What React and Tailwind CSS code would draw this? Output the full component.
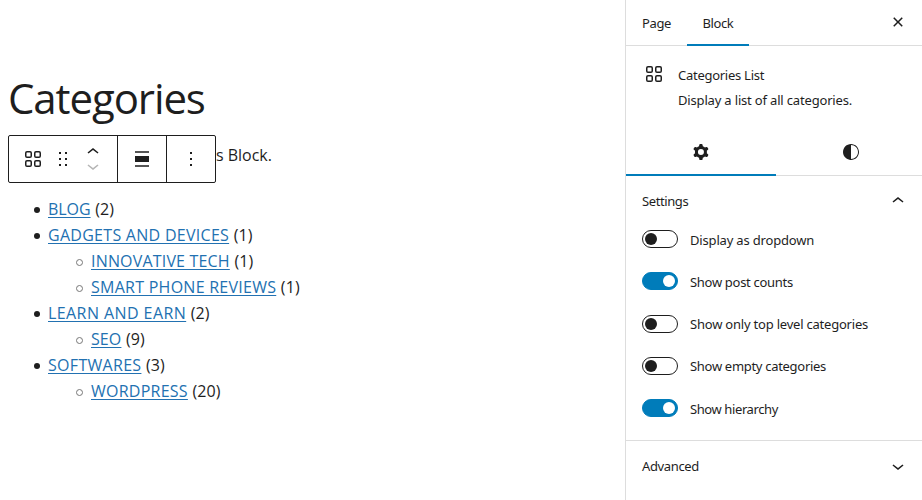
import React from "react";
import clsx from "clsx";

const ICONS = {
  category:
    "M6 5.5h3a.5.5 0 01.5.5v3a.5.5 0 01-.5.5H6a.5.5 0 01-.5-.5V6a.5.5 0 01.5-.5zM4 6a2 2 0 012-2h3a2 2 0 012 2v3a2 2 0 01-2 2H6a2 2 0 01-2-2V6zm11-.5h3a.5.5 0 01.5.5v3a.5.5 0 01-.5.5h-3a.5.5 0 01-.5-.5V6a.5.5 0 01.5-.5zM13 6a2 2 0 012-2h3a2 2 0 012 2v3a2 2 0 01-2 2h-3a2 2 0 01-2-2V6zm5 8.5h-3a.5.5 0 00-.5.5v3a.5.5 0 00.5.5h3a.5.5 0 00.5-.5v-3a.5.5 0 00-.5-.5zM15 13a2 2 0 00-2 2v3a2 2 0 002 2h3a2 2 0 002-2v-3a2 2 0 00-2-2h-3zm-9 1.5h3a.5.5 0 01.5.5v3a.5.5 0 01-.5.5H6a.5.5 0 01-.5-.5v-3a.5.5 0 01.5-.5zM4 15a2 2 0 012-2h3a2 2 0 012 2v3a2 2 0 01-2 2H6a2 2 0 01-2-2v-3z",
  drag: "M8 7h2V5H8v2zm0 6h2v-2H8v2zm0 6h2v-2H8v2zm6-14v2h2V5h-2zm0 8h2v-2h-2v2zm0 6h2v-2h-2v2z",
  up: "M6.5 12.4L12 8l5.5 4.4-.9 1.2L12 10l-4.5 3.6-1-1.2z",
  down: "M17.5 11.6L12 16l-5.5-4.4.9-1.2L12 14l4.5-3.6 1 1.2z",
  align: "M5 15h14V9H5v6zm0 4.8h14v-1.5H5v1.5zM5 4.2v1.5h14V4.2H5z",
  more: "M13 19h-2v-2h2v2zm0-6h-2v-2h2v2zm0-6h-2V5h2v2z",
  close:
    "M12 13.06l3.712 3.713 1.061-1.06L13.061 12l3.712-3.712-1.06-1.06L12 10.938 8.288 7.227l-1.061 1.06L10.939 12l-3.712 3.712 1.06 1.061L12 13.061z",
  cog: "M10.289 4.836A1 1 0 0111.275 4h1.306a1 1 0 01.987.836l.244 1.466c.787.26 1.503.679 2.108 1.218l1.393-.522a1 1 0 011.216.437l.653 1.13a1 1 0 01-.23 1.273l-1.148.944a6.025 6.025 0 010 2.435l1.149.946a1 1 0 01.23 1.272l-.653 1.13a1 1 0 01-1.216.437l-1.394-.522c-.605.54-1.32.958-2.108 1.218l-.244 1.466a1 1 0 01-.987.836h-1.306a1 1 0 01-.986-.836l-.244-1.466a5.995 5.995 0 01-2.108-1.218l-1.394.522a1 1 0 01-1.217-.436l-.653-1.131a1 1 0 01.23-1.272l1.149-.946a6.026 6.026 0 010-2.435l-1.148-.944a1 1 0 01-.23-1.272l.653-1.131a1 1 0 011.217-.437l1.393.522a5.994 5.994 0 012.108-1.218l.244-1.466zM14.929 12a3 3 0 11-6 0 3 3 0 016 0z",
  styles:
    "M12 4c-4.4 0-8 3.6-8 8v.1c0 4.1 3.2 7.5 7.2 7.9h.8c4.4 0 8-3.6 8-8s-3.6-8-8-8zm0 15V5c3.9 0 7 3.1 7 7s-3.1 7-7 7z",
};

function Icon({ name, className }) {
  return (
    <svg viewBox="0 0 24 24" className={clsx("size-6 shrink-0 fill-current", className)}>
      <path fillRule="evenodd" clipRule="evenodd" d={ICONS[name]} />
    </svg>
  );
}

const CATEGORIES = [
  { name: "BLOG", count: 2, spacing: "tracking-[-0.05px]" },
  {
    name: "GADGETS AND DEVICES",
    count: 1,
    spacing: "tracking-[0.28px]",
    children: [
      { name: "INNOVATIVE TECH", count: 1, spacing: "tracking-[0.18px]" },
      { name: "SMART PHONE REVIEWS", count: 1, spacing: "tracking-[0.26px]" },
    ],
  },
  {
    name: "LEARN AND EARN",
    count: 2,
    spacing: "tracking-[0.42px]",
    children: [{ name: "SEO", count: 9, spacing: "tracking-[0.1px]" }],
  },
  {
    name: "SOFTWARES",
    count: 3,
    spacing: "tracking-[0.3px]",
    children: [{ name: "WORDPRESS", count: 20, spacing: "tracking-[0.25px]" }],
  },
];

function CategoryList({ items, nested }) {
  return (
    <ul className={nested ? "pl-[43px]" : "pl-10"}>
      {items.map((item) => (
        <li key={item.name}>
          <div className="relative flex h-[26px] items-center whitespace-pre">
            <span
              className={clsx(
                "absolute rounded-full",
                nested
                  ? "top-[10.5px] -left-[15.5px] size-[7px] border border-[#777]"
                  : "top-[10.5px] -left-[14px] size-[6px] bg-[#1e1e1e]"
              )}
            />
            <a
              className={clsx(
                "text-[#2271b1] underline decoration-1 underline-offset-2",
                item.spacing
              )}
            >
              {item.name}
            </a>
            <span className="ml-[4.6px] tracking-[0.1px]">({item.count})</span>
          </div>
          {item.children && <CategoryList items={item.children} nested />}
        </li>
      ))}
    </ul>
  );
}

function BlockToolbar() {
  return (
    <div className="absolute top-[135px] left-2 flex h-12 w-[208px] rounded-[2px] border border-[#1e1e1e] bg-white">
      <div className="flex w-[109px] items-center border-r border-[#1e1e1e] pl-3">
        <Icon name="category" />
        <Icon name="drag" className="ml-[6px]" />
        <div className="ml-[6px] flex h-[38px] flex-col justify-between">
          <Icon name="up" />
          <Icon name="down" className="-mt-[10px] text-[#b5b5b5]" />
        </div>
      </div>
      <div className="flex w-[49px] items-center justify-center border-r border-[#1e1e1e]">
        <Icon name="align" />
      </div>
      <div className="flex flex-1 items-center justify-center">
        <Icon name="more" />
      </div>
    </div>
  );
}

function Toggle({ on, label, spacing }) {
  return (
    <div className="flex h-[18px] items-start">
      <span
        className={clsx(
          "flex h-[18px] w-9 items-center rounded-full border px-[2px]",
          on ? "justify-end border-[#007cba] bg-[#007cba]" : "border-[#1e1e1e] bg-white"
        )}
      >
        <span className={clsx("size-3 rounded-full", on ? "bg-white" : "bg-[#1e1e1e]")} />
      </span>
      <span className={clsx("mt-[0.6px] ml-3", spacing)}>{label}</span>
    </div>
  );
}

function Sidebar() {
  return (
    <aside className="flex w-[297px] shrink-0 flex-col border-l border-[#ddd] font-['Noto_Sans',sans-serif] text-[13px] leading-[18px] whitespace-nowrap">
      <header className="flex h-[46px] items-stretch border-b border-[#ddd] pr-3">
        <div className="flex w-[61px] items-center pl-4 tracking-[-0.35px]">Page</div>
        <div className="-mb-px flex w-[62px] items-center justify-center border-b-2 border-[#007cba] pt-[2px] tracking-[-0.4px]">
          Block
        </div>
        <div className="ml-auto flex items-center pb-[1px]">
          <Icon name="close" />
        </div>
      </header>
      <section className="flex h-[83px] px-4 pt-4">
        <Icon name="category" />
        <div className="ml-3 flex flex-col gap-[7px] pt-1">
          <h2 className="tracking-[-0.27px]">Categories List</h2>
          <p className="tracking-[-0.17px]">Display a list of all categories.</p>
        </div>
      </section>
      <div className="flex h-[47px] border-b border-[#ddd]">
        <div className="-mb-px flex w-[150px] shrink-0 items-center justify-center border-b-2 border-[#007cba]">
          <Icon name="cog" />
        </div>
        <div className="flex w-[150px] shrink-0 items-center justify-center">
          <Icon name="styles" />
        </div>
      </div>
      <section className="h-[265px] border-b border-[#ddd] px-4">
        <div className="-mr-1 flex h-[50px] items-center justify-between">
          <h3 className="tracking-[-0.4px]">Settings</h3>
          <Icon name="up" />
        </div>
        <div className="flex h-[191px] flex-col justify-between pt-1">
          <Toggle label="Display as dropdown" spacing="tracking-[-0.17px]" />
          <Toggle on label="Show post counts" spacing="tracking-[-0.3px]" />
          <Toggle label="Show only top level categories" spacing="tracking-[-0.21px]" />
          <Toggle label="Show empty categories" spacing="tracking-[-0.3px]" />
          <Toggle on label="Show hierarchy" spacing="tracking-[-0.4px]" />
        </div>
      </section>
      <section className="flex h-[51px] items-center justify-between pr-3 pl-4">
        <h3 className="-mt-px tracking-[-0.35px]">Advanced</h3>
        <Icon name="down" className="-mt-px" />
      </section>
    </aside>
  );
}

export default function App() {
  return (
    <div className="flex h-[500px] w-[922px] overflow-hidden bg-white text-[#1e1e1e]">
      <main className="relative flex-1 font-['Open_Sans','Noto_Sans',sans-serif] text-[16px]">
        <h1 className="pt-[70px] pl-2 text-[42px] leading-[56px] tracking-[-1.1px]">Categories</h1>
        <p className="mt-4 pl-[216px] leading-[26px] tracking-[-0.02px]">s Block.</p>
        <div className="mt-[28px] pl-2">
          <CategoryList items={CATEGORIES} />
        </div>
        <BlockToolbar />
      </main>
      <Sidebar />
    </div>
  );
}
